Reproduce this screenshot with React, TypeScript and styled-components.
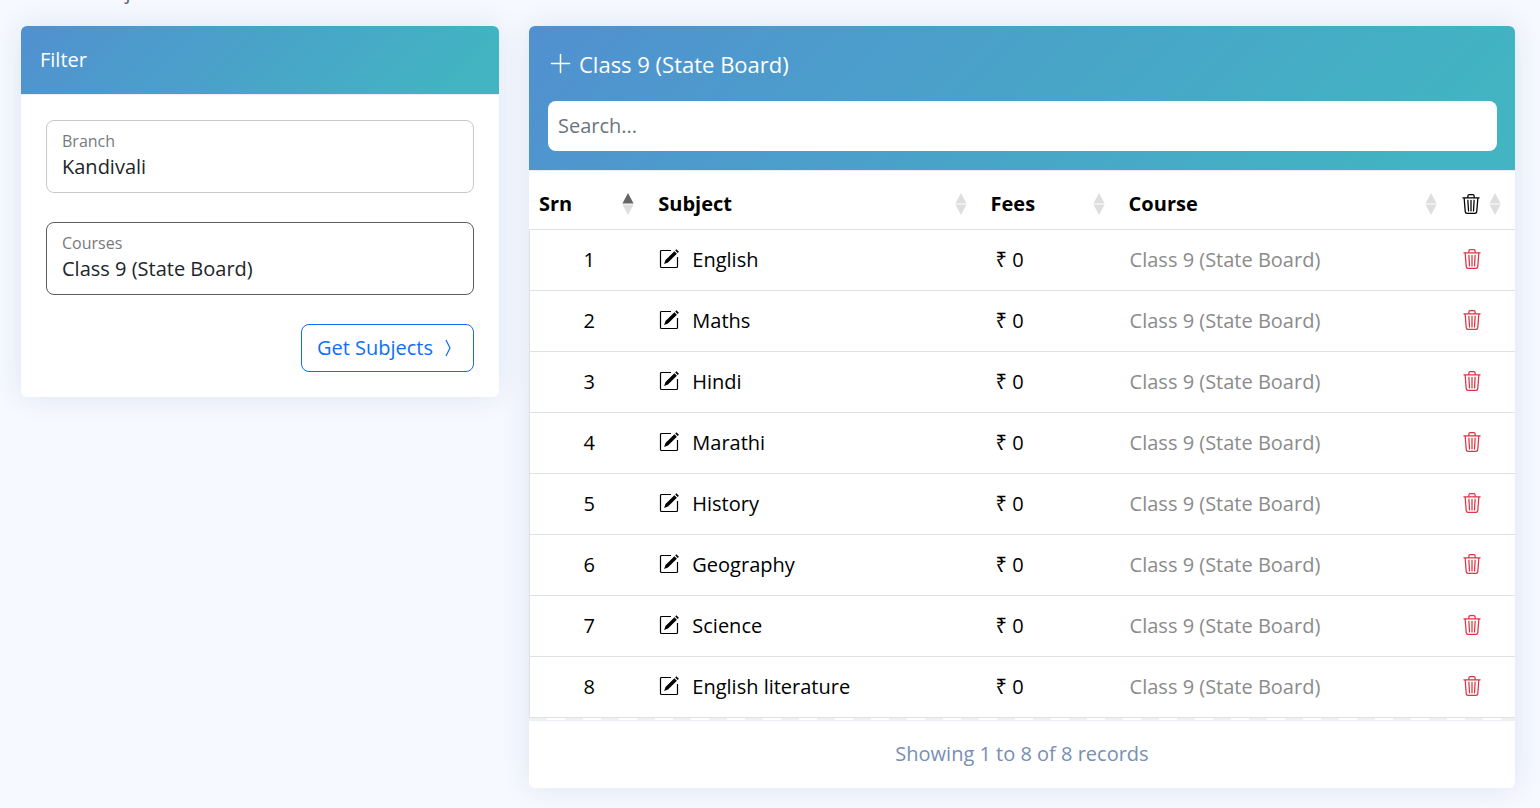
import React from "react";
import styled, { createGlobalStyle } from "styled-components";
import { BsTrash3 } from "react-icons/bs";

const Global = createGlobalStyle`
  *, *::before, *::after { box-sizing: border-box; }
  body {
    margin: 0;
    background: #f6f9ff;
    color: #000;
    font-family: "Open Sans", "Noto Sans", sans-serif;
    font-size: 20px;
    line-height: 30px;
  }
  button, input, select { font: inherit; }
`;

const Page = styled.main`
  padding: 0 25px 20px 21px;
`;

const TopStrip = styled.header`
  height: 26px;
  overflow: hidden;
  display: flex;
  align-items: flex-start;
  padding-left: 41px;
`;

const PageTitle = styled.h1`
  margin: -23px 0 0;
  font-size: 20px;
  line-height: 30px;
  font-weight: 400;
  color: #5b6480;
`;

const Columns = styled.div`
  display: grid;
  grid-template-columns: minmax(0, 478fr) minmax(0, 986fr);
  gap: 30px;
  align-items: start;
`;

const Card = styled.section`
  background: #fff;
  border-radius: 6px;
  box-shadow: 0 0 30px rgba(1, 41, 112, 0.1);
`;

const CardHeader = styled.header`
  padding: 19px 18px 19px 19px;
  color: #fff;
  background: linear-gradient(135deg, #5190d0 0%, #42b4c2 90%);
  border-bottom: 1px solid #ebeef4;
  border-radius: 6px 6px 0 0;
`;

const FilterTitle = styled.h2`
  margin: 0;
  font-size: 20px;
  line-height: 30px;
  font-weight: 400;
`;

const FilterForm = styled.form`
  display: flex;
  flex-direction: column;
  gap: 29px;
  padding: 25px;
`;

const Field = styled.label<{ $strong?: boolean }>`
  display: flex;
  flex-direction: column;
  height: 73px;
  padding: 8px 15px;
  border: 1px solid ${(p) => (p.$strong ? "#5c5c5f" : "#c9c9cb")};
  border-radius: 8px;
`;

const FieldName = styled.span`
  font-size: 16px;
  line-height: 24px;
  color: #777a7e;
`;

const FieldSelect = styled.select`
  appearance: none;
  width: 100%;
  height: 28px;
  padding: 0;
  border: 0;
  background: transparent;
  color: #212529;
  line-height: 28px;
  outline: 0;
`;

const SubmitButton = styled.button`
  align-self: flex-end;
  display: flex;
  align-items: center;
  gap: 9px;
  height: 48px;
  padding: 0 15px;
  border: 1px solid #0d6efd;
  border-radius: 8px;
  background: transparent;
  color: #0d6efd;
`;

const TitleRow = styled.h2`
  display: flex;
  align-items: center;
  gap: 5px;
  margin: 0 0 18px;
  font-size: 22px;
  line-height: 38px;
  font-weight: 400;
`;

const AddButton = styled.button`
  display: flex;
  padding: 0;
  border: 0;
  background: transparent;
  color: inherit;
`;

const SearchBox = styled.input`
  display: block;
  width: 100%;
  height: 50px;
  padding: 0 10px 2px;
  border: 0;
  border-radius: 8px;
  background: #fff;
  color: #212529;
  &::placeholder { color: #6c757d; opacity: 1; }
`;

const TableWrap = styled.div`
  border-bottom: 1px solid #ebeef4;
`;

const LoadingStripe = styled.div`
  height: 2px;
  background: repeating-linear-gradient(90deg, #f1f1f1 0 18px, #fff 18px 36px);
`;

const Table = styled.table`
  width: 100%;
  table-layout: fixed;
  border-collapse: separate;
  border-spacing: 0;
`;

const HeadCell = styled.th<{ $share?: string }>`
  width: ${(p) => p.$share ?? "auto"};
  height: 59px;
  padding: 8px 14px 0 10px;
  border-bottom: 1px solid #dee2e6;
  text-align: left;
  font-weight: 700;
`;

const HeadContent = styled.div`
  display: flex;
  align-items: center;
  justify-content: space-between;
`;

const Cell = styled.td<{ $align?: string; $muted?: boolean; $inset?: boolean }>`
  height: 61px;
  padding: 0 11px 0 ${(p) => (p.$inset ? "15px" : "11px")};
  border-bottom: 1px solid #dee2e6;
  text-align: ${(p) => p.$align ?? "left"};
  color: ${(p) => (p.$muted ? "#8b8b8b" : "#000")};
  &:first-child { border-left: 1px solid #dee2e6; }
`;

const SubjectContent = styled.div`
  display: flex;
  align-items: center;
  gap: 13px;
`;

const IconButton = styled.button<{ $danger?: boolean }>`
  display: flex;
  padding: 0 0 2px;
  border: 0;
  background: transparent;
  color: ${(p) => (p.$danger ? "#dc3545" : "#000")};
`;

const CardFooter = styled.footer`
  padding: 18px 18px 19px;
  text-align: center;
  color: #798eb3;
`;

const SortArrows = ({ ascending }: { ascending?: boolean }) => (
  <svg width="12" height="22" viewBox="0 0 12 22" aria-hidden="true">
    <path d="M6 0L11.6 10.5H.4z" fill={ascending ? "#666" : "#dedede"} />
    <path d="M.4 11.6H11.6L6 22z" fill="#dedede" />
  </svg>
);

const EditIcon = () => (
  <svg width="20" height="20" viewBox="0 0 20 20" fill="none" aria-hidden="true">
    <path d="M12 1.5H2.5a1 1 0 0 0-1 1v15a1 1 0 0 0 1 1h15a1 1 0 0 0 1-1V8" stroke="currentColor" strokeWidth="1.2" />
    <path d="M15.4 2.2l2.5 2.5-8.9 8.9-3.9 1.4 1.4-3.9z" fill="currentColor" />
    <path d="M16.2 1.4L17.4.2l2.5 2.5-1.2 1.2z" fill="currentColor" />
  </svg>
);

const PlusIcon = () => (
  <svg width="26" height="26" viewBox="0 0 26 26" fill="none" aria-hidden="true">
    <path d="M12.5 3.5v18M3.5 12.5h18" stroke="currentColor" strokeWidth="1.5" strokeLinecap="round" />
  </svg>
);

const ChevronIcon = () => (
  <svg width="16" height="18" viewBox="0 0 16 18" fill="none" aria-hidden="true">
    <path d="M4 1l4 8-4 8" stroke="currentColor" strokeWidth="1.2" />
  </svg>
);

const course = "Class 9 (State Board)";
const subjects = [
  "English", "Maths", "Hindi", "Marathi",
  "History", "Geography", "Science", "English literature",
];

const columns = [
  { name: "Srn", share: "12.1%" },
  { name: "Subject", share: "33.7%" },
  { name: "Fees", share: "14%" },
  { name: "Course", share: "33.7%" },
];

export default function App() {
  return (
    <>
      <Global />
      <Page>
        <TopStrip>
          <PageTitle>All Subjects</PageTitle>
        </TopStrip>
        <Columns>
          <Card>
            <CardHeader>
              <FilterTitle>Filter</FilterTitle>
            </CardHeader>
            <FilterForm onSubmit={(e) => e.preventDefault()}>
              <Field>
                <FieldName>Branch</FieldName>
                <FieldSelect><option>Kandivali</option></FieldSelect>
              </Field>
              <Field $strong>
                <FieldName>Courses</FieldName>
                <FieldSelect><option>{course}</option></FieldSelect>
              </Field>
              <SubmitButton type="submit">
                Get Subjects <ChevronIcon />
              </SubmitButton>
            </FilterForm>
          </Card>

          <Card>
            <CardHeader>
              <TitleRow>
                <AddButton type="button" aria-label="Add subject"><PlusIcon /></AddButton>
                {course}
              </TitleRow>
              <SearchBox type="search" placeholder="Search..." aria-label="Search subjects" />
            </CardHeader>
            <TableWrap>
              <Table>
                <thead>
                  <tr>
                    {columns.map((c, i) => (
                      <HeadCell key={c.name} $share={c.share} scope="col">
                        <HeadContent>{c.name}<SortArrows ascending={i === 0} /></HeadContent>
                      </HeadCell>
                    ))}
                    <HeadCell scope="col" aria-label="Delete">
                      <HeadContent><BsTrash3 size={20} /><SortArrows /></HeadContent>
                    </HeadCell>
                  </tr>
                </thead>
                <tbody>
                  {subjects.map((s, i) => (
                    <tr key={s}>
                      <Cell $align="center">{i + 1}</Cell>
                      <Cell>
                        <SubjectContent>
                          <IconButton type="button" aria-label={`Edit ${s}`}><EditIcon /></IconButton>
                          {s}
                        </SubjectContent>
                      </Cell>
                      <Cell $inset>₹ 0</Cell>
                      <Cell $muted>{course}</Cell>
                      <Cell>
                        <IconButton type="button" $danger aria-label={`Delete ${s}`}><BsTrash3 size={20} /></IconButton>
                      </Cell>
                    </tr>
                  ))}
                </tbody>
              </Table>
              <LoadingStripe />
            </TableWrap>
            <CardFooter>Showing 1 to 8 of 8 records</CardFooter>
          </Card>
        </Columns>
      </Page>
    </>
  );
}
